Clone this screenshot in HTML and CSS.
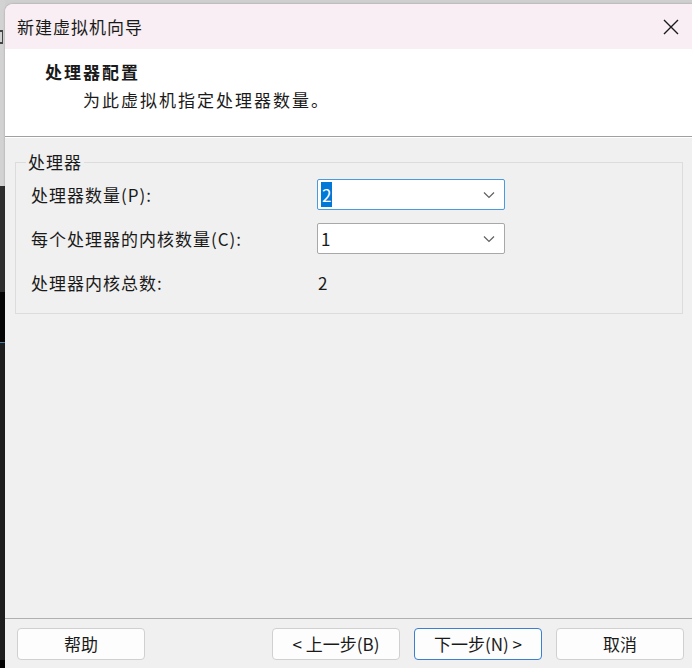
FILE: index.html
```html
<!DOCTYPE html>
<html lang="zh-CN">
<head>
  <meta charset="UTF-8" />
  <title>新建虚拟机向导</title>
  <link rel="stylesheet" href="styles.css">
</head>
<body>

  <div class="fondo-izq">
    <div class="marca"></div>
  </div>

  <div class="dialogo">
    <div class="barra-titulo">
      <span class="titulo">新建虚拟机向导</span>
      <span class="cerrar">
        <svg width="16" height="16" viewBox="0 0 16 16">
          <path d="M1 1 L15 15 M15 1 L1 15" stroke="#1a1a1a" stroke-width="1.4" fill="none"/>
        </svg>
      </span>
    </div>

    <div class="cabecera">
      <div class="cab-titulo">处理器配置</div>
      <div class="cab-sub">为此虚拟机指定处理器数量。</div>
    </div>

    <div class="cuerpo">
      <fieldset class="grupo">
        <legend>处理器</legend>
        <div class="fila">
          <span class="etiqueta">处理器数量(P):</span>
          <div class="combo activo">
            <span class="valor"><span class="sel">2</span></span>
            <svg class="flecha" width="12" height="8" viewBox="0 0 12 8">
              <path d="M1 1.5 L6 6.5 L11 1.5" stroke="#606060" stroke-width="1.2" fill="none"/>
            </svg>
          </div>
        </div>
        <div class="fila segunda">
          <span class="etiqueta">每个处理器的内核数量(C):</span>
          <div class="combo">
            <span class="valor">1</span>
            <svg class="flecha" width="12" height="8" viewBox="0 0 12 8">
              <path d="M1 1.5 L6 6.5 L11 1.5" stroke="#606060" stroke-width="1.2" fill="none"/>
            </svg>
          </div>
        </div>
        <div class="fila">
          <span class="etiqueta">处理器内核总数:</span>
          <span class="total">2</span>
        </div>
      </fieldset>
    </div>

    <div class="pie">
      <button class="boton">帮助</button>
      <div class="navegacion">
        <button class="boton">&lt; 上一步(B)</button>
        <button class="boton principal">下一步(N) &gt;</button>
        <button class="boton">取消</button>
      </div>
    </div>
  </div>

</body>
</html>
```

FILE: styles.css
```css
body {
  margin: 0;
  height: 668px;
  overflow: hidden;
  display: flex;
  background: #cfcfcf;
  font-family: "Noto Sans CJK SC", "Noto Sans", sans-serif;
  color: #1a1a1a;
}

.fondo-izq {
  width: 5px;
  flex-shrink: 0;
  background: linear-gradient(#d2d2d2 0, #d2d2d2 186px, #2e2e2e 186px, #2e2e2e 292px, #050505 292px, #050505 342px, #4a7fa8 342px, #4a7fa8 343px, #1e1e1e 343px, #1e1e1e 660px, #000 660px);
}

.marca {
  margin-top: 30px;
  width: 3px;
  height: 14px;
  border-top: 2px solid #444;
  border-bottom: 2px solid #444;
  border-right: 1px solid #444;
  box-sizing: border-box;
}

.dialogo {
  flex: 1;
  margin-top: 4px;
  display: flex;
  flex-direction: column;
  background: #f0f0f0;
  border-top-left-radius: 8px;
  overflow: hidden;
  box-shadow: 0 0 2px rgba(0, 0, 0, 0.3);
}

.barra-titulo {
  height: 45px;
  background: #f8eef3;
  display: flex;
  align-items: center;
  justify-content: space-between;
  padding: 0 13px 0 12px;
}

.titulo {
  font-size: 17px;
  letter-spacing: 1px;
}

.cerrar {
  display: flex;
}

.cabecera {
  height: 88px;
  background: #fff;
  border-bottom: 1px solid #a0a0a0;
  padding: 10px 0 0 40px;
  box-sizing: border-box;
}

.cab-titulo {
  font-size: 17px;
  font-weight: bold;
  letter-spacing: 2px;
  line-height: 26px;
}

.cab-sub {
  font-size: 17px;
  letter-spacing: 2px;
  line-height: 26px;
  margin-top: 2px;
  padding-left: 38px;
}

.cuerpo {
  flex: 1;
  padding: 13px 9px 0 10px;
  border-top: 1px solid #fff;
}

.grupo {
  margin: 0;
  border: 1px solid #dcdcdc;
  padding: 0 0 0 15px;
  height: 163px;
  box-sizing: border-box;
}

.grupo legend {
  font-size: 17px;
  letter-spacing: 1px;
  padding: 0 2px;
  margin-left: -5px;
  line-height: 22px;
}

.fila {
  display: flex;
  align-items: center;
  height: 43px;
}

.fila.segunda {
  height: 45px;
}

.etiqueta {
  width: 286px;
  font-size: 17px;
  letter-spacing: 1px;
}

.combo {
  width: 188px;
  height: 31px;
  box-sizing: border-box;
  background: #fff;
  border: 1px solid #a8a8a8;
  border-radius: 2px;
  display: flex;
  align-items: center;
  justify-content: space-between;
  padding: 0 9px 0 3px;
}

.combo.activo {
  border-color: #4a9ae0;
}

.valor {
  font-size: 17px;
}

.sel {
  background: #0078d7;
  color: #fff;
  padding: 0 1px;
}

.total {
  font-size: 17px;
  padding-left: 1px;
}

.pie {
  height: 49px;
  border-top: 1px solid #b0b0b0;
  display: flex;
  align-items: center;
  justify-content: space-between;
  padding: 0 8px 0 12px;
}

.navegacion {
  display: flex;
  gap: 14px;
}

.boton {
  width: 128px;
  height: 32px;
  font-family: "Noto Sans CJK SC", "Noto Sans", sans-serif;
  font-size: 17px;
  color: #1a1a1a;
  background: #fdfdfd;
  border: 1px solid #d0d0d0;
  border-radius: 4px;
  padding: 0;
}

.boton.principal {
  border-color: #3a7fd0;
}
```
